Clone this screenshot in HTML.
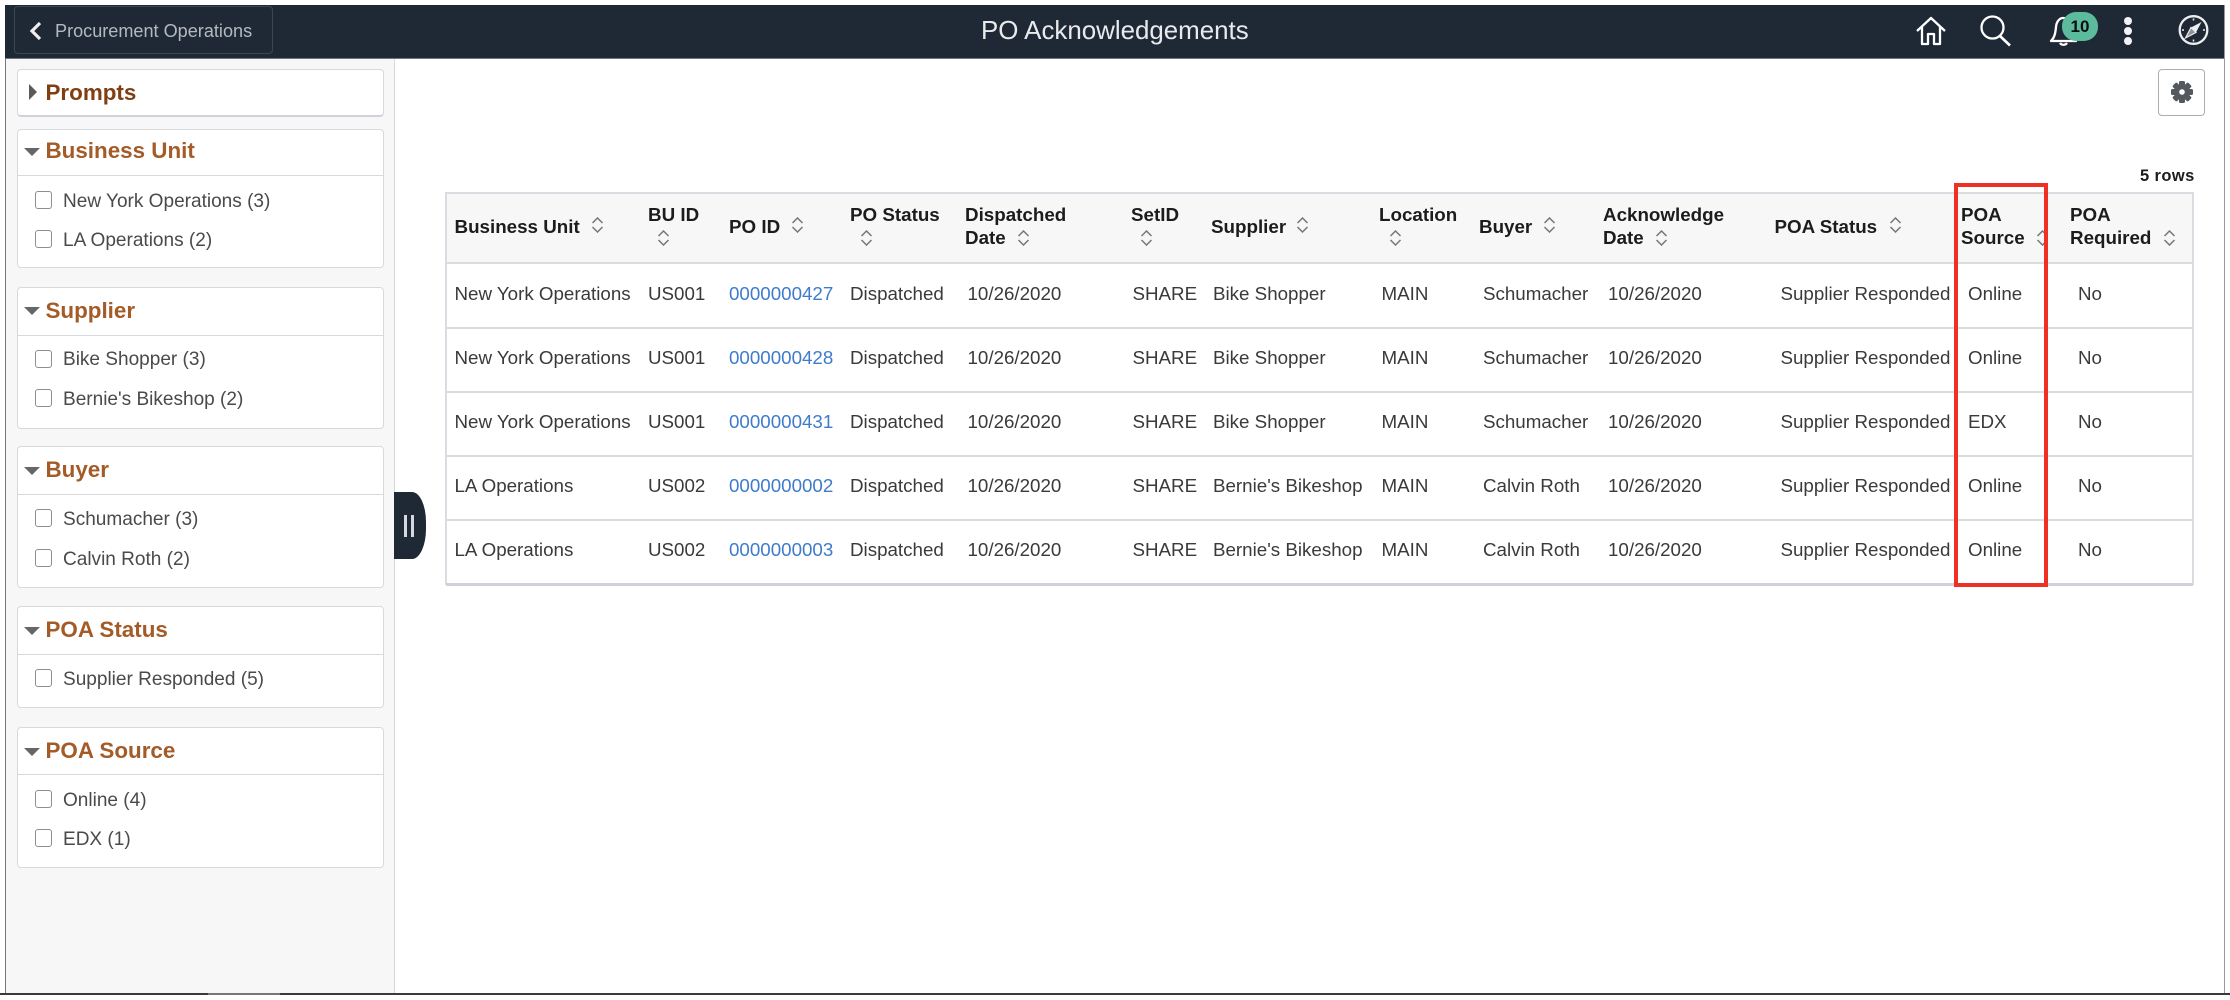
<!DOCTYPE html>
<html lang="en">
<head>
<meta charset="utf-8">
<title>PO Acknowledgements</title>
<style>
html,body{margin:0;padding:0;width:2230px;height:1000px;overflow:hidden;background:#fff}
body{position:relative;font-family:"Liberation Sans",Arial,sans-serif;color:#333}
div,span,svg{position:absolute;display:block}
.t{white-space:nowrap;height:24px;line-height:24px;font-size:18.75px;color:#3a3a3a;margin-top:1px}
.h{white-space:nowrap;height:24px;line-height:24px;font-size:18.8px;font-weight:700;color:#1c1c1c}
.a{color:#3f7bcb}
.l{white-space:nowrap;height:24px;line-height:24px;font-size:19.05px;color:#4a4a4a;left:63px}
.p{left:17px;width:367px;background:#fff;border:1px solid #d6d9de;border-radius:4px;box-sizing:border-box}
.pt{white-space:nowrap;left:45.5px;height:30px;line-height:30px;font-size:22.4px;font-weight:700;color:#a35b27}
.c{left:34.5px;width:17.5px;height:17.5px;background:#fff;border:1.5px solid #8a8f96;border-radius:3px;box-sizing:border-box}
.d{left:24px;width:0;height:0;border-left:8px solid transparent;border-right:8px solid transparent;border-top:8px solid #666}
.hl{left:18px;width:365px;height:1px;background:#d6d9de}
.r{left:446px;width:1747px;height:2px;background:#d9dce1}
.s{width:13px;height:16px}
</style>
</head>
<body>
<svg width="0" height="0" style="left:0;top:0"><defs><symbol id="so" viewBox="0 0 13 16"><path d="M1.5 6 L6.5 1 L11.5 6 M1.5 10 L6.5 15 L11.5 10" fill="none" stroke="#777" stroke-width="1.5"/></symbol></defs></svg>

<!-- frame -->
<div style="left:5px;top:5px;width:1px;height:988px;background:#777"></div>
<div style="left:2224px;top:5px;width:1px;height:988px;background:#999"></div>
<div style="left:0;top:993px;width:2230px;height:2px;background:#3a3a3a"></div>
<div style="left:208px;top:993px;width:72px;height:2px;background:#777"></div>

<!-- header -->
<div style="left:5px;top:5px;width:2219px;height:53px;background:#1f2936;border-bottom:1px solid #6f7680"></div>
<div style="left:14px;top:6px;width:259px;height:48px;border:1px solid #3b4655;border-radius:4px;box-sizing:border-box"></div>
<svg style="left:28px;top:21px" width="16" height="20" viewBox="0 0 16 20"><path d="M12 2 L4 10 L12 18" fill="none" stroke="#eceef0" stroke-width="3.2"/></svg>
<span class="t" style="left:55px;top:19px;font-size:18.1px;color:#b4b9bf;margin-top:0">Procurement Operations</span>
<span class="t" style="left:981px;top:17px;height:28px;line-height:28px;font-size:25.9px;color:#e8eaec;margin-top:0">PO Acknowledgements</span>

<svg style="left:1915px;top:16px" width="32" height="30" viewBox="0 0 32 30"><path d="M2 15 L16 2 L30 15 M7 11 V28 H13 V18 H19 V28 H25 V11" fill="none" stroke="#fff" stroke-width="2.3" stroke-linejoin="round"/></svg>
<svg style="left:1979px;top:15px" width="33" height="32" viewBox="0 0 33 32"><circle cx="13.5" cy="12.5" r="11" fill="none" stroke="#fff" stroke-width="2.3"/><path d="M21 21 L31 30.5" stroke="#fff" stroke-width="2.6"/></svg>
<svg style="left:2049px;top:15px" width="30" height="32" viewBox="0 0 30 32"><path d="M2 26 C6 22 6.500 17 7 12 C7.500 6 11 3 14 3 C18 3 21 6 21.500 12 C22 17 23 22 27 26 Z" fill="none" stroke="#fff" stroke-width="2.3" stroke-linejoin="round"/><path d="M11 28 A4 3.500 0 0 0 18 28" fill="none" stroke="#fff" stroke-width="2.2"/></svg>
<div style="left:2062px;top:12px;width:36px;height:29px;border-radius:14px;background:#5dbb9d"></div>
<span style="left:2062px;top:12px;width:36px;height:29px;line-height:29px;text-align:center;font-size:17px;font-weight:700;color:#0b0f12;white-space:nowrap">10</span>
<div style="left:2124px;top:17px;width:8px;height:8px;border-radius:50%;background:#f2f3f4"></div>
<div style="left:2124px;top:27px;width:8px;height:8px;border-radius:50%;background:#f2f3f4"></div>
<div style="left:2124px;top:37px;width:8px;height:8px;border-radius:50%;background:#f2f3f4"></div>
<svg style="left:2178px;top:14px" width="31" height="32" viewBox="0 0 31 32"><circle cx="15.500" cy="16" r="13.800" fill="none" stroke="#eceef0" stroke-width="2.300"/><path d="M23.500 8 L18 18.500 L13 13.500 Z" fill="#eceef0"/><path d="M7.500 24 L13 13.500 L18 18.500 Z" fill="#8f949a" stroke="#eceef0" stroke-width="1.200"/><path d="M15.500 4.500 V6.500 M15.500 25.500 V27.500 M4 16 H6 M25 16 H27" stroke="#eceef0" stroke-width="1.500"/></svg>

<!-- sidebar -->
<div style="left:6px;top:59px;width:388px;height:934px;background:#f7f7f7;border-right:1px solid #d5d8de"></div>

<div class="p" style="top:69px;height:48px;border-bottom:2px solid #cfd2d8"></div>
<div style="left:28.500px;top:84px;width:0;height:0;border-top:8px solid transparent;border-bottom:8px solid transparent;border-left:8px solid #5a5a5a"></div>
<span class="pt" style="top:78px;color:#7f3f13">Prompts</span>

<div class="p" style="top:129px;height:139px"></div>
<div class="hl" style="top:175px"></div>
<div class="d" style="top:148px"></div>
<span class="pt" style="top:136px">Business Unit</span>
<div class="c" style="top:191px"></div><span class="l" style="top:190px">New York Operations (3)</span>
<div class="c" style="top:230px"></div><span class="l" style="top:229px">LA Operations (2)</span>

<div class="p" style="top:287px;height:142px"></div>
<div class="hl" style="top:335px"></div>
<div class="d" style="top:307px"></div>
<span class="pt" style="top:296px">Supplier</span>
<div class="c" style="top:350px"></div><span class="l" style="top:348px">Bike Shopper (3)</span>
<div class="c" style="top:389px"></div><span class="l" style="top:388px">Bernie's Bikeshop (2)</span>

<div class="p" style="top:446px;height:142px"></div>
<div class="hl" style="top:494px"></div>
<div class="d" style="top:467px"></div>
<span class="pt" style="top:455px">Buyer</span>
<div class="c" style="top:509px"></div><span class="l" style="top:508px">Schumacher (3)</span>
<div class="c" style="top:549px"></div><span class="l" style="top:548px">Calvin Roth (2)</span>

<div class="p" style="top:606px;height:102px"></div>
<div class="hl" style="top:654px"></div>
<div class="d" style="top:627px"></div>
<span class="pt" style="top:614.500px">POA Status</span>
<div class="c" style="top:669px"></div><span class="l" style="top:667.500px">Supplier Responded (5)</span>

<div class="p" style="top:727px;height:141px"></div>
<div class="hl" style="top:774px"></div>
<div class="d" style="top:748px"></div>
<span class="pt" style="top:735.500px">POA Source</span>
<div class="c" style="top:790px"></div><span class="l" style="top:789px">Online (4)</span>
<div class="c" style="top:829px"></div><span class="l" style="top:827.500px">EDX (1)</span>

<!-- collapse handle -->
<div style="left:394px;top:492px;width:32px;height:67px;background:#1f2936;border-radius:0 14px 14px 0 / 0 30px 30px 0"></div>
<div style="left:404px;top:515px;width:3px;height:22px;background:#d5d8dc"></div>
<div style="left:411px;top:515px;width:3px;height:22px;background:#d5d8dc"></div>

<!-- gear -->
<div style="left:2158px;top:69px;width:47px;height:47px;background:#fff;border:1.5px solid #a9aeb5;border-radius:4px;box-sizing:border-box"></div>
<svg style="left:2170px;top:80px" width="24" height="24" viewBox="0 0 24 24"><g fill="#54595f"><circle cx="12" cy="12" r="8"/><rect x="9" y="1" width="6" height="22" rx="1.500"/><rect x="9" y="1" width="6" height="22" rx="1.500" transform="rotate(45 12 12)"/><rect x="9" y="1" width="6" height="22" rx="1.500" transform="rotate(90 12 12)"/><rect x="9" y="1" width="6" height="22" rx="1.500" transform="rotate(135 12 12)"/></g><circle cx="12" cy="12" r="2.800" fill="#fff"/></svg>

<span class="h" style="left:2140px;top:164px;font-size:16.5px;letter-spacing:.4px">5 rows</span>

<!-- table -->
<div style="left:446px;top:192px;width:1746px;height:71px;background:#f7f7f7;border-top:2px solid #d9dce1;box-sizing:border-box"></div>
<div style="left:445px;top:192px;width:2px;height:393px;background:#d9dce1"></div>
<div style="left:2192px;top:192px;width:2px;height:393px;background:#d9dce1"></div>
<div class="r" style="top:262px"></div>
<div class="r" style="top:327px"></div>
<div class="r" style="top:391px"></div>
<div class="r" style="top:455px"></div>
<div class="r" style="top:519px"></div>
<div class="r" style="top:583px;height:3px;background:#cfd2d8"></div>

<span class="h" style="left:454.500px;top:215px">Business Unit</span>
<span class="h" style="left:648px;top:203px">BU ID</span>
<span class="h" style="left:729px;top:215px">PO ID</span>
<span class="h" style="left:850px;top:203px">PO Status</span>
<span class="h" style="left:965px;top:203px">Dispatched</span><span class="h" style="left:965px;top:226px">Date</span>
<span class="h" style="left:1131px;top:203px">SetID</span>
<span class="h" style="left:1211px;top:215px">Supplier</span>
<span class="h" style="left:1379px;top:203px">Location</span>
<span class="h" style="left:1479px;top:215px">Buyer</span>
<span class="h" style="left:1603px;top:203px">Acknowledge</span><span class="h" style="left:1603px;top:226px">Date</span>
<span class="h" style="left:1774.500px;top:215px">POA Status</span>
<span class="h" style="left:1961px;top:203px">POA</span><span class="h" style="left:1961px;top:226px">Source</span>
<span class="h" style="left:2070px;top:203px">POA</span><span class="h" style="left:2070px;top:226px">Required</span>

<svg class="s" style="left:590.500px;top:217px"><use href="#so"/></svg>
<svg class="s" style="left:657px;top:229.500px"><use href="#so"/></svg>
<svg class="s" style="left:791px;top:217px"><use href="#so"/></svg>
<svg class="s" style="left:860px;top:229.500px"><use href="#so"/></svg>
<svg class="s" style="left:1017px;top:229.500px"><use href="#so"/></svg>
<svg class="s" style="left:1140px;top:229.500px"><use href="#so"/></svg>
<svg class="s" style="left:1295.500px;top:217px"><use href="#so"/></svg>
<svg class="s" style="left:1389px;top:229.500px"><use href="#so"/></svg>
<svg class="s" style="left:1543px;top:217px"><use href="#so"/></svg>
<svg class="s" style="left:1654.500px;top:229.500px"><use href="#so"/></svg>
<svg class="s" style="left:1889px;top:217px"><use href="#so"/></svg>
<svg class="s" style="left:2035.500px;top:229.500px"><use href="#so"/></svg>
<svg class="s" style="left:2162.500px;top:229.500px"><use href="#so"/></svg>

<!-- row 1 -->
<span class="t" style="left:454.500px;top:281px">New York Operations</span><span class="t" style="left:648px;top:281px">US001</span><span class="t a" style="left:729px;top:281px">0000000427</span><span class="t" style="left:850px;top:281px">Dispatched</span><span class="t" style="left:967.500px;top:281px">10/26/2020</span><span class="t" style="left:1132.500px;top:281px">SHARE</span><span class="t" style="left:1213px;top:281px">Bike Shopper</span><span class="t" style="left:1381.500px;top:281px">MAIN</span><span class="t" style="left:1483px;top:281px">Schumacher</span><span class="t" style="left:1608px;top:281px">10/26/2020</span><span class="t" style="left:1780.500px;top:281px">Supplier Responded</span><span class="t" style="left:1968px;top:281px">Online</span><span class="t" style="left:2078px;top:281px">No</span>
<!-- row 2 -->
<span class="t" style="left:454.500px;top:345px">New York Operations</span><span class="t" style="left:648px;top:345px">US001</span><span class="t a" style="left:729px;top:345px">0000000428</span><span class="t" style="left:850px;top:345px">Dispatched</span><span class="t" style="left:967.500px;top:345px">10/26/2020</span><span class="t" style="left:1132.500px;top:345px">SHARE</span><span class="t" style="left:1213px;top:345px">Bike Shopper</span><span class="t" style="left:1381.500px;top:345px">MAIN</span><span class="t" style="left:1483px;top:345px">Schumacher</span><span class="t" style="left:1608px;top:345px">10/26/2020</span><span class="t" style="left:1780.500px;top:345px">Supplier Responded</span><span class="t" style="left:1968px;top:345px">Online</span><span class="t" style="left:2078px;top:345px">No</span>
<!-- row 3 -->
<span class="t" style="left:454.500px;top:409px">New York Operations</span><span class="t" style="left:648px;top:409px">US001</span><span class="t a" style="left:729px;top:409px">0000000431</span><span class="t" style="left:850px;top:409px">Dispatched</span><span class="t" style="left:967.500px;top:409px">10/26/2020</span><span class="t" style="left:1132.500px;top:409px">SHARE</span><span class="t" style="left:1213px;top:409px">Bike Shopper</span><span class="t" style="left:1381.500px;top:409px">MAIN</span><span class="t" style="left:1483px;top:409px">Schumacher</span><span class="t" style="left:1608px;top:409px">10/26/2020</span><span class="t" style="left:1780.500px;top:409px">Supplier Responded</span><span class="t" style="left:1968px;top:409px">EDX</span><span class="t" style="left:2078px;top:409px">No</span>
<!-- row 4 -->
<span class="t" style="left:454.500px;top:473px">LA Operations</span><span class="t" style="left:648px;top:473px">US002</span><span class="t a" style="left:729px;top:473px">0000000002</span><span class="t" style="left:850px;top:473px">Dispatched</span><span class="t" style="left:967.500px;top:473px">10/26/2020</span><span class="t" style="left:1132.500px;top:473px">SHARE</span><span class="t" style="left:1213px;top:473px">Bernie's Bikeshop</span><span class="t" style="left:1381.500px;top:473px">MAIN</span><span class="t" style="left:1483px;top:473px">Calvin Roth</span><span class="t" style="left:1608px;top:473px">10/26/2020</span><span class="t" style="left:1780.500px;top:473px">Supplier Responded</span><span class="t" style="left:1968px;top:473px">Online</span><span class="t" style="left:2078px;top:473px">No</span>
<!-- row 5 -->
<span class="t" style="left:454.500px;top:537px">LA Operations</span><span class="t" style="left:648px;top:537px">US002</span><span class="t a" style="left:729px;top:537px">0000000003</span><span class="t" style="left:850px;top:537px">Dispatched</span><span class="t" style="left:967.500px;top:537px">10/26/2020</span><span class="t" style="left:1132.500px;top:537px">SHARE</span><span class="t" style="left:1213px;top:537px">Bernie's Bikeshop</span><span class="t" style="left:1381.500px;top:537px">MAIN</span><span class="t" style="left:1483px;top:537px">Calvin Roth</span><span class="t" style="left:1608px;top:537px">10/26/2020</span><span class="t" style="left:1780.500px;top:537px">Supplier Responded</span><span class="t" style="left:1968px;top:537px">Online</span><span class="t" style="left:2078px;top:537px">No</span>

<!-- red highlight -->
<div style="left:1954px;top:183px;width:94px;height:404px;border:4px solid #ee3124;box-sizing:border-box"></div>
</body>
</html>
